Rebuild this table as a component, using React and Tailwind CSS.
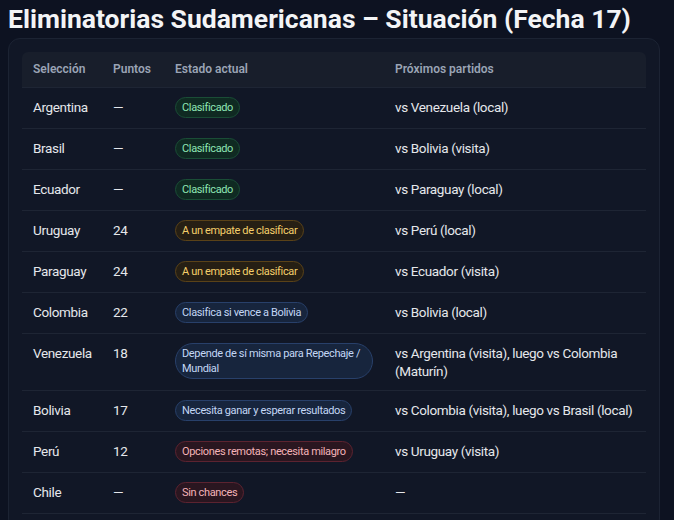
import React from 'react';

const rows = [
  { team: 'Argentina', pts: '—', status: 'Clasificado', tone: 'green', next: 'vs Venezuela (local)' },
  { team: 'Brasil', pts: '—', status: 'Clasificado', tone: 'green', next: 'vs Bolivia (visita)' },
  { team: 'Ecuador', pts: '—', status: 'Clasificado', tone: 'green', next: 'vs Paraguay (local)' },
  { team: 'Uruguay', pts: '24', status: 'A un empate de clasificar', tone: 'amber', next: 'vs Perú (local)' },
  { team: 'Paraguay', pts: '24', status: 'A un empate de clasificar', tone: 'amber', next: 'vs Ecuador (visita)' },
  { team: 'Colombia', pts: '22', status: 'Clasifica si vence a Bolivia', tone: 'blue', next: 'vs Bolivia (local)' },
  { team: 'Venezuela', pts: '18', status: 'Depende de sí misma para Repechaje / Mundial', tone: 'blue', next: 'vs Argentina (visita), luego vs Colombia (Maturín)' },
  { team: 'Bolivia', pts: '17', status: 'Necesita ganar y esperar resultados', tone: 'blue', next: 'vs Colombia (visita), luego vs Brasil (local)' },
  { team: 'Perú', pts: '12', status: 'Opciones remotas; necesita milagro', tone: 'red', next: 'vs Uruguay (visita)' },
  { team: 'Chile', pts: '—', status: 'Sin chances', tone: 'red', next: '—' },
];

const tones = {
  green: 'bg-[#0f2a22] border-[#1a4d36] text-[#8ee6b4]',
  amber: 'bg-[#261f14] border-[#5a4218] text-[#f5cf6b]',
  blue: 'bg-[#17253d] border-[#28406a] text-[#c3d7f5]',
  red: 'bg-[#2a1620] border-[#5c2330] text-[#f4b3b8]',
};

const Pill = ({ tone, children }) => (
  <span className={`inline-block max-w-[198px] align-top rounded-full border px-[6px] py-[2px] text-[11px] leading-[15px] tracking-[-0.35px] ${tones[tone]}`}>
    {children}
  </span>
);

export default function App() {
  return (
    <div className="min-h-screen bg-[#0d1221] px-2 pt-[4px] text-[#e5e7eb]" style={{ fontFamily: 'Roboto, "Noto Sans", sans-serif' }}>
      <h1 className="text-[26.5px] font-bold leading-[30px] text-[#f3f4f6]">
        Eliminatorias Sudamericanas – Situación (Fecha 17)
      </h1>
      <div className="mt-[4px] w-[652px] rounded-xl border border-[#1c2333] bg-[#111726] px-[13px] pt-[13px] pb-4">
        <table className="w-[624px] table-fixed border-collapse text-left">
          <colgroup>
            <col className="w-[80px]" />
            <col className="w-[62px]" />
            <col className="w-[220px]" />
            <col />
          </colgroup>
          <thead>
            <tr className="bg-[#181e2b] text-[12px] text-[#9aa4b5]">
              <th className="rounded-tl-md px-[11px] py-[10px] leading-[15px] font-semibold">Selección</th>
              <th className="px-[11px] py-[10px] leading-[15px] font-semibold">Puntos</th>
              <th className="px-[11px] py-[10px] leading-[15px] font-semibold">Estado actual</th>
              <th className="rounded-tr-md px-[11px] py-[10px] leading-[15px] font-semibold">Próximos partidos</th>
            </tr>
          </thead>
          <tbody className="text-[13.5px] leading-[18px] tracking-[-0.35px]">
            {rows.map((r) => (
              <tr key={r.team} className="border-t border-[#1e2534]">
                <td className="px-[11px] pt-[10px] pb-[10px] align-top">{r.team}</td>
                <td className="px-[11px] pt-[10px] pb-[10px] align-top">{r.pts}</td>
                <td className="px-[11px] pt-[9px] pb-[10px] align-top">
                  <Pill tone={r.tone}>{r.status}</Pill>
                </td>
                <td className="pl-[11px] pr-[6px] pt-[10px] pb-[10px] align-top">{r.next}</td>
              </tr>
            ))}
            <tr className="border-t border-[#1e2534]"><td colSpan={4}></td></tr>
          </tbody>
        </table>
      </div>
    </div>
  );
}
